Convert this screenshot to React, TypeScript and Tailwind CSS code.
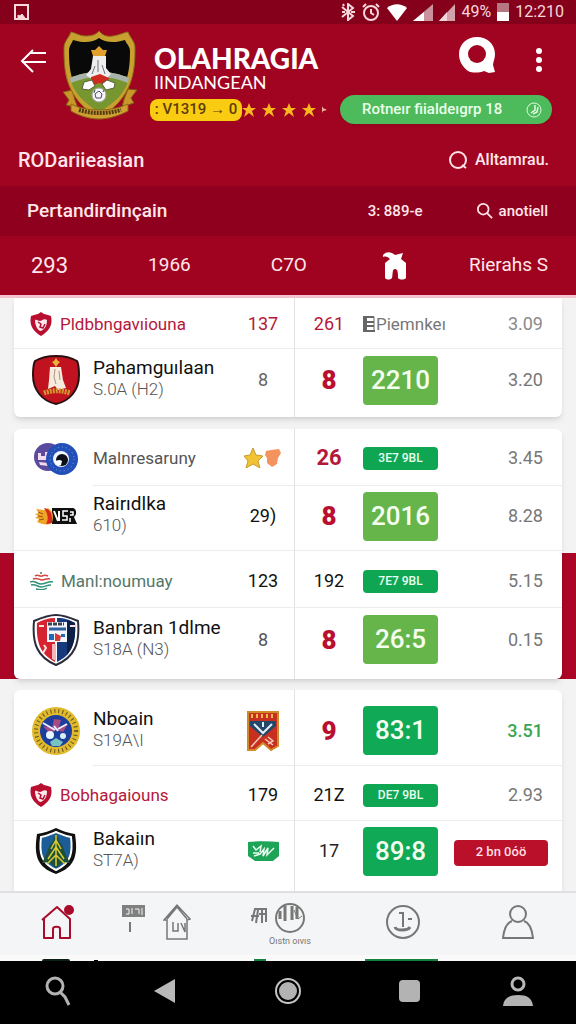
import type { ReactNode } from "react";
import clsx from "clsx";

type Match = {
  lead?: boolean;
  crest: ReactNode;
  name: string;
  nameClass?: string;
  sub?: string;
  first: ReactNode;
  firstClass?: string;
  second: string;
  secondClass: string;
  badge: ReactNode;
  odds: ReactNode;
  oddsClass?: string;
  rowClass: string;
  inset?: boolean;
};

/* ---------- crests ---------- */

const HeaderCrest = () => (
  <svg width="78" height="90" viewBox="0 0 78 90" aria-hidden="true">
    <path d="M2 62l9-2 3 10 3 8-12-3 3-5zM76 60l-9-1-4 10-2 8 12-4-3-5z" fill="#c9962a" stroke="#7d5612" />
    <path d="M38 1c4 5 9 6 14 5 7-1 12-4 15-4 2 6 7 9 7 16 0 24-2 50-36 70C4 68 3 42 3 18 3 11 8 8 10 2c5 1 9 4 14 4 6 0 11-1 14-5z" fill="#c8a02f" stroke="#8f6c1b" />
    <path d="M38 8c6 5 17 5 26 2 2 5 5 6 5 11 0 23-3 42-31 61C11 63 8 44 8 21c0-5 2-6 4-11 9 3 20 3 26-2z" fill="#090909" />
    <path d="M9 48c17-8 42-8 59 0-3 13-12 24-30 34C21 72 12 61 9 48z" fill="#77962f" />
    <path d="M9 48c17-8 42-8 59 0l-1 5c-18-8-39-8-57 0z" fill="#a8b3ab" />
    <path d="M30 20h4l4-4 4 4h4l-2 6H32z" fill="#e0a02c" />
    <path d="M32 26h13v12l5 6-5 5-7-4-6 5-7-5 5-6z" fill="#efeeee" />
    <path d="M37 30v12M41 35l3 9M34 36l-3 8" stroke="#6f7278" />
    <path d="M30 47l9-3 9 4-2 7-8-2-8 3z" fill="#cf2a21" />
    <path d="M23 52l8-2 3 6-6 4-7-1zM46 50l8 3-1 5-8 2-4-6z" fill="#fff" stroke="#59613c" strokeWidth="1" />
    <circle cx="38" cy="65" r="7" fill="#f6f4fa" stroke="#9ea4a0" />
    <path d="M38 61l3 3-1 4h-5l-1-4zM34 60l-1 3M43 60l-1 2" stroke="#4a4a5e" fill="none" />
    <path d="M10 74c16 8 40 8 57 0v7c-8 4-18 8-29 8s-21-4-28-8z" fill="#cfa032" stroke="#8c6718" />
    <path d="M18 80c13 4 28 4 42 0" fill="none" stroke="#513b12" strokeWidth="4" strokeDasharray="2 1" />
  </svg>
);

const SmallShield = () => (
  <svg width="22" height="24" viewBox="0 0 22 24" className="shrink-0" aria-hidden="true">
    <path d="M11 0l3 2c3 1 5 1 7 2 2 9-2 15-10 20C3 19-1 13 1 4c2-1 4-1 7-2z" fill="#b80f31" />
    <path d="M5 8c2-1 3 1 5 1s4-3 7-1c0 4-1 7-3 9l-3 2c-3 0-6-5-6-11z" fill="#fbe9ee" />
    <path d="M8 10l3 2-1 3 3 1 2-4" fill="none" stroke="#b80f31" strokeWidth="1.5" />
  </svg>
);

const RedCrest = () => (
  <svg width="48" height="50" viewBox="0 0 48 50" aria-hidden="true">
    <path d="M24 1c8 0 16 2 21 5 2 4 2 9 2 14 0 15-9 26-23 29C10 46 1 35 1 20c0-5 0-10 2-14 5-3 13-5 21-5z" fill="#c1121f" stroke="#2b1113" strokeWidth="2" />
    <path d="M24 3l2 3 2 1-2 2-2 3-2-3-2-2 2-1z" fill="#edb334" />
    <path d="M18 12h11l2 13 3 8-8 2-3-4-7 3 1-9z" fill="#f6ebdc" />
    <path d="M23 14l-1 8 2 7M27 16l1 9" stroke="#a99383" fill="none" />
    <path d="M12 38c8-3 17-3 26 0" fill="none" stroke="#d49a2b" strokeWidth="5" strokeDasharray="2 1" />
  </svg>
);

const BlueEye = () => (
  <svg width="44" height="34" viewBox="0 0 44 34" aria-hidden="true">
    <circle cx="14" cy="15" r="14" fill="#5b4a9e" />
    <path d="M4 11h3v3h4v-4h3v8H4zM5 20l9 1v3l-8-1z" fill="#f3d9ec" />
    <circle cx="28" cy="17" r="16" fill="#2350b8" />
    <circle cx="28" cy="17" r="12" fill="none" stroke="#7fa0e6" strokeDasharray="1 3" />
    <circle cx="27" cy="17" r="8" fill="#eef4ff" />
    <circle cx="28" cy="18" r="6" fill="#0a0e16" />
    <path d="M20 19c3 0 5-2 8 0l-1 4c-3 1-6-1-7-4z" fill="#fff" />
  </svg>
);

const FlameMark = () => (
  <svg width="42" height="18" viewBox="0 0 42 18" aria-hidden="true">
    <path d="M17 1h21c4 1 4 7 1 9l3 7H17z" fill="#101010" />
    <path d="M1 2l8 1 4-2c5 3 6 7 4 15-5 3-10 1-15-1l2-3-4-1 3-2-3-2 4-1z" fill="#efa526" />
    <path d="M9 1c5 1 9 4 8 15l-6 1c3-5 2-10-2-16z" fill="#d7281f" />
    <path d="M3 5l5 2M3 9l5 1M4 13l5-1" stroke="#a0500f" />
    <path d="M19 4l4 10M24 4v10" stroke="#fff" strokeWidth="2" fill="none" />
    <path d="M33 4h-5v5h4v4h-5M35 5h3v3h-3M35 11v4" stroke="#fff" strokeWidth="1.5" fill="none" />
  </svg>
);

const WaveMark = () => (
  <svg width="23" height="18" viewBox="0 0 23 18" className="shrink-0" fill="none" strokeWidth="1.5" aria-hidden="true">
    <path d="M5 4c3-2 5 1 7 0s4-1 6 0M3 7c4-2 6 1 9 1s5-2 8-1" stroke="#d9463f" />
    <path d="M11 0v2" stroke="#52735b" />
    <path d="M0 10c5-2 7 2 11 2s7-3 12-2M1 13c5-1 7 2 10 2s6-2 10-2M6 17c4 1 8 1 11-1" stroke="#2f927a" />
  </svg>
);

const SplitCrest = () => (
  <svg width="48" height="52" viewBox="0 0 48 52" aria-hidden="true">
    <path d="M24 1c8 0 15 3 22 6 2 22-3 36-22 44C5 43 0 29 2 7c7-3 14-6 22-6z" fill="#fff" stroke="#2a2c3b" strokeWidth="2" />
    <path d="M23 4C16 4 10 6 5 9c-1 19 3 31 18 39z" fill="#d5232f" />
    <path d="M25 4c8 0 13 2 18 5 1 19-3 32-18 39z" fill="#173a7c" />
    <path d="M35 6l8 3c1 13-1 24-8 32z" fill="#0d1f47" />
    <path d="M15 8h20v20H15z" fill="#f3f5fb" />
    <path d="M16 10h16" stroke="#39404f" strokeWidth="3" strokeDasharray="4 1" />
    <path d="M17 15h17" stroke="#2d5fa3" strokeWidth="3" />
    <path d="M17 20h5v6h-5zM29 20h4v3h-4z" fill="#2269b3" />
    <path d="M23 19l6 3-1 5h-5z" fill="#d63a34" />
    <path d="M7 12h5M38 12h5M12 31l2 3-3 5" stroke="#f9e1e3" strokeWidth="2" fill="none" />
    <path d="M20 30h4v17l-4-2z" fill="#f6b6bd" />
  </svg>
);

const RoundCrest = () => (
  <svg width="50" height="52" viewBox="0 0 50 52" aria-hidden="true">
    <circle cx="25" cy="26" r="24" fill="#e0b92c" />
    <circle cx="25" cy="26" r="20" fill="none" stroke="#665521" strokeWidth="4" strokeDasharray="1 3" />
    <circle cx="25" cy="26" r="16" fill="#1d3e9c" />
    <path d="M23 14l7 1-2 7 9-3-5 8-7-2-6 4-7-8 9 2z" fill="#a84a83" />
    <path d="M12 18l12 7M36 19l-9 5M23 21l4 5" stroke="#e9edff" strokeWidth="2" />
    <circle cx="19" cy="30" r="4" fill="#e7f7ff" />
    <circle cx="32" cy="31" r="3" fill="#d8eef7" />
    <path d="M19 37l6-4 7 4-3 4h-8z" fill="#76c3c1" />
  </svg>
);

const TreeCrest = () => (
  <svg width="44" height="48" viewBox="0 0 44 48" aria-hidden="true">
    <path d="M22 1c6 3 12 5 19 6 3 20 1 33-19 40C2 40 0 27 3 7c7-1 13-3 19-6z" fill="#101010" />
    <path d="M22 5c5 2 9 4 15 5 2 16 0 26-15 33C7 36 5 26 7 10c6-1 10-3 15-5z" fill="#1c5d98" stroke="#fff" strokeWidth="2" />
    <path d="M22 6l3 8 4 6 2 6 5 10-7-1-7 6-7-6-7 1 5-10 2-6 4-6z" fill="#1e4f38" />
    <path d="M22 8v31M22 13l-5 9M22 13l5 9M22 20l-8 12M22 20l8 12M22 28l-9 9M22 28l9 9" stroke="#dacb35" strokeWidth="1.5" fill="none" />
  </svg>
);

const StarMark = () => (
  <svg width="38" height="20" viewBox="0 0 38 20" className="mx-auto" aria-hidden="true">
    <path d="M9 0l3 7 7 1-5 5 2 7-7-4-7 4 2-7-4-5 6-1z" fill="#f1c232" stroke="#c99a2e" />
    <path d="M22 3l5-1 8-1 2 4-3 5-1 6-5 3-5-4v-5l-2-3z" fill="#f5935f" />
  </svg>
);

const Pennant = () => (
  <svg width="32" height="40" viewBox="0 0 32 40" className="mx-auto" aria-hidden="true">
    <path d="M1 1h30v34l-7 4-8-7-8 7H1z" fill="#c7301f" stroke="#d08a27" strokeWidth="2" />
    <path d="M4 5h24" stroke="#f0b64f" strokeWidth="4" strokeDasharray="2 3" />
    <path d="M3 10h26v5L16 26 3 15z" fill="#21476b" />
    <path d="M7 13l9 9 9-9M16 11v5" stroke="#e6eff6" strokeWidth="2" fill="none" />
    <path d="M4 36l11-12M18 28l8 6M21 26l5 4-5 3" stroke="#f2c9b8" strokeWidth="1.5" fill="none" />
  </svg>
);

const GreenFlag = () => (
  <svg width="31" height="21" viewBox="0 0 31 21" className="mx-auto" aria-hidden="true">
    <path d="M0 1c10-1 21-1 31 0v14l-6 5H7l-7-5z" fill="#1ea457" />
    <path d="M5 5l3 4 5-4-1 6M6 15l6-2 4-5-1 7 5-8-1 7 7-7M5 12l6 0" stroke="#eafff1" strokeWidth="1.5" fill="none" />
  </svg>
);

/* ---------- small pieces ---------- */

const Score = ({ children, bright }: { children: ReactNode; bright?: boolean }) => (
  <div className={clsx("flex h-[49px] w-[75px] items-center justify-center rounded text-[26px] font-medium text-[#f4fff0]", bright ? "bg-[#10a956]" : "bg-[#66b54b]")}>
    {children}
  </div>
);

const Chip = ({ children }: { children: ReactNode }) => (
  <div className="flex h-[23px] w-[75px] items-center justify-center rounded bg-[#0fa653] text-xs font-medium text-[#e9fff0]">
    {children}
  </div>
);

const red = "text-[#b5173a]";
const blob = "text-[26px] font-black text-[#b90f30]";

const groups: Match[][] = [
  [
    {
      lead: true, crest: <SmallShield />, name: "Pldbbngavıiouna", nameClass: red,
      first: "137", firstClass: red, second: "261", secondClass: red,
      badge: (
        <span className="flex items-center gap-px text-[17px] text-[#777]">
          <svg width="12" height="16" viewBox="0 0 12 16" className="shrink-0" fill="none" stroke="#666" strokeWidth="2" aria-hidden="true">
            <path d="M3 1h8M3 6h8M3 10h8M0 15h12" />
            <path d="M2 0v15" strokeWidth="4" />
            <path d="M11 1v14" strokeWidth="1" />
          </svg>
          Piemnkeı
        </span>
      ),
      odds: "3.09", oddsClass: "text-[#8a8a8a]", rowClass: "h-[51px] pt-0.5",
    },
    {
      crest: <RedCrest />, name: "Pahamguılaan", sub: "S.0A (H2)", first: "8", firstClass: "text-[#666]",
      second: "8", secondClass: blob, badge: <Score>2210</Score>, odds: "3.20", rowClass: "h-[68px] pb-1.5",
    },
  ],
  [
    {
      crest: <BlueEye />, name: "Malnresaruny", nameClass: "text-[17px] text-[#555]", first: <StarMark />,
      second: "26", secondClass: "text-[22px] font-bold text-[#b5173a]", badge: <Chip>3E7 9BL</Chip>,
      odds: "3.45", rowClass: "h-[57px] pt-0.5", inset: true,
    },
    {
      crest: <FlameMark />, name: "Rairıdlka", sub: "610)", first: "29)", firstClass: "text-lg text-[#111]",
      second: "8", secondClass: blob, badge: <Score>2016</Score>, odds: "8.28", rowClass: "h-[65px] pb-1",
    },
    {
      lead: true, crest: <WaveMark />, name: "Manl:noumuay", nameClass: "text-[#54776b]",
      first: "123", firstClass: "text-[#111]", second: "192", secondClass: "text-[#111]",
      badge: <Chip>7E7 9BL</Chip>, odds: "5.15", rowClass: "h-[57px] pt-1",
    },
    {
      crest: <SplitCrest />, name: "Banbran 1dlme", sub: "S18A (N3)", first: "8", firstClass: "text-[#555]",
      second: "8", secondClass: blob, badge: <Score>26:5</Score>, odds: "0.15", rowClass: "h-[71px] pb-2",
    },
  ],
  [
    {
      crest: <RoundCrest />, name: "Nboain", sub: "S19A\\I", first: <Pennant />, second: "9", secondClass: blob,
      badge: <Score bright>83:1</Score>, odds: "3.51", oddsClass: "font-medium text-[#37a553]",
      rowClass: "h-[76px] pt-1.5", inset: true,
    },
    {
      lead: true, crest: <SmallShield />, name: "Bobhagaiouns", nameClass: red, first: "179", firstClass: "text-[#111]",
      second: "21Z", secondClass: "text-[#111]", badge: <Chip>DE7 9BL</Chip>, odds: "2.93", rowClass: "h-[55px] pt-1",
    },
    {
      crest: <TreeCrest />, name: "Bakaiın", sub: "ST7A)", first: <GreenFlag />, second: "17", secondClass: "text-[#222]",
      badge: <Score bright>89:8</Score>,
      odds: (
        <button className="h-[26px] w-[94px] rounded bg-[#bb1029] text-[13px] font-medium text-[#ffdfe3]">2 bn 0óö</button>
      ),
      rowClass: "h-[70px] pb-2.5",
    },
  ],
];

function MatchTable({ rows, className }: { rows: Match[]; className?: string }) {
  return (
    <table className={clsx("w-full table-fixed border-separate border-spacing-0 rounded-md bg-white text-lg shadow-md", className)}>
      <colgroup>
        <col className="w-[79px]" />
        <col />
        <col className="w-[62px]" />
        <col className="w-[69px]" />
        <col className="w-[78px]" />
        <col className="w-[121px]" />
      </colgroup>
      <tbody>
        {rows.map((row, i) => {
          const line = i < rows.length - 1 && "border-b border-[#ececec]";
          return (
            <tr key={row.name}>
              {row.lead ? (
                <td colSpan={2} className={clsx("py-0 pl-4", row.rowClass, line)}>
                  <div className={clsx("flex items-center gap-2 whitespace-nowrap text-[17px]", row.nameClass)}>
                    {row.crest}
                    {row.name}
                  </div>
                </td>
              ) : (
                <>
                  <td className={clsx("py-0 pl-1", row.rowClass, !row.inset && line)}>
                    <div className="flex justify-center">{row.crest}</div>
                  </td>
                  <td className={clsx("whitespace-nowrap py-0", row.rowClass, line)}>
                    <div className={clsx("leading-[22px]", row.nameClass ?? "text-[19px] text-[#111]")}>{row.name}</div>
                    {row.sub && <div className="pb-1 text-[17px] font-light leading-5 text-[#555]">{row.sub}</div>}
                  </td>
                </>
              )}
              <td className={clsx("py-0 text-center", row.rowClass, line, row.firstClass)}>{row.first}</td>
              <td className={clsx("border-l border-l-[#e2e2e2] py-0 text-center leading-6", row.rowClass, line, row.secondClass)}>{row.second}</td>
              <td className={clsx("whitespace-nowrap py-0", row.rowClass, line)}>{row.badge}</td>
              <td className={clsx("py-0 text-right", typeof row.odds === "string" ? "pr-[19px]" : "pr-[14px]", row.rowClass, line, row.oddsClass ?? "text-[#777]")}>
                {row.odds}
              </td>
            </tr>
          );
        })}
      </tbody>
    </table>
  );
}

function StatusBar() {
  return (
    <div className="flex h-6 items-center bg-[#85001b] pl-3.5 pr-3 text-base leading-none text-[#f6d8dd]">
      <svg width="15" height="16" viewBox="0 0 15 16" fill="none" stroke="#f6d8dd" strokeWidth="2" aria-hidden="true">
        <path d="M1 1h13v14H1z" />
        <path d="M4 14v-3l2 1 2-2 3 4z" fill="#f6d8dd" strokeWidth="1" />
      </svg>
      <div className="ml-auto flex items-center gap-1.5">
        <svg width="14" height="18" viewBox="0 0 14 18" fill="none" stroke="#f6d8dd" strokeWidth="2" aria-hidden="true">
          <path d="M1 4l11 9-5 4V1l5 4L1 14M1 9h3M10 9h4M2 1l1 2" />
        </svg>
        <svg width="20" height="18" viewBox="0 0 20 18" fill="none" stroke="#f6d8dd" strokeWidth="2" aria-hidden="true">
          <circle cx="10" cy="10" r="7" />
          <path d="M10 6v4l3 2M2 4l3-3M18 4l-3-3" />
        </svg>
        <svg width="20" height="17" viewBox="0 0 20 17" fill="#fff" aria-hidden="true">
          <path d="M0 4c6-5 14-5 20 0L10 17z" />
        </svg>
        <svg width="20" height="17" viewBox="0 0 20 17" aria-hidden="true">
          <path d="M20 0v17H0z" fill="#c9929c" />
          <path d="M11 8v9H0z" fill="#fff" />
        </svg>
        <svg width="16" height="17" viewBox="0 0 16 17" aria-hidden="true">
          <path d="M16 0v17H0z" fill="#d3a2ab" />
          <path d="M8 8v9H0z" fill="#f3d5da" />
        </svg>
        <span>49%</span>
        <svg width="12" height="18" viewBox="0 0 12 18" aria-hidden="true">
          <path d="M0 0h12v18H0z" fill="#b67782" />
          <path d="M0 9h12v9H0z" fill="#fff" />
        </svg>
        <span>12:210</span>
      </div>
    </div>
  );
}

function Header() {
  return (
    <header className="flex h-[109px] gap-[15px] bg-[#a10421] pl-5 pr-6 text-white">
      <button aria-label="Back" className="mt-6 h-[26px] w-[26px] shrink-0">
        <svg width="26" height="26" viewBox="0 0 26 26" fill="none" stroke="#fff" strokeWidth="2" aria-hidden="true">
          <path d="M13 2L2 13l11 11M13 5l-3 0M2 14h24M11 5h15" />
        </svg>
      </button>
      <div className="mt-1.5 shrink-0">
        <HeaderCrest />
      </div>
      <div className="flex min-w-0 flex-1 flex-col">
        <div className="flex h-[71px] items-start">
          <div className="pt-[18px] font-[Lato,sans-serif]">
            <h1 className="text-[28px] font-black leading-8">OLAHRAGIA</h1>
            <p className="text-lg leading-4">IINDANGEAN</p>
          </div>
          <button aria-label="Search" className="ml-auto mt-3">
            <svg width="38" height="38" viewBox="0 0 38 38" aria-hidden="true">
              <path d="M19 1c10 0 18 7 18 17 0 5-2 8-2 11l2 7-6 1-5-2c-5 2-12 2-16 0C5 31 1 26 1 18 1 8 9 1 19 1z" fill="#fff" />
              <circle cx="19" cy="18" r="9" fill="#a10421" />
            </svg>
          </button>
          <button aria-label="More" className="ml-10 mr-2.5 mt-6">
            <svg width="6" height="24" viewBox="0 0 6 24" fill="#fff" aria-hidden="true">
              <circle cx="3" cy="3" r="3" />
              <circle cx="3" cy="12" r="3" />
              <circle cx="3" cy="21" r="3" />
            </svg>
          </button>
        </div>
        <div className="flex items-center">
          <span className="-ml-1 flex h-[22px] w-[92px] shrink-0 items-center justify-center whitespace-nowrap rounded-lg bg-[#f9cc12] text-[15px] font-medium text-[#5e3c05]">: V1319 → 0</span>
          <div className="flex items-center gap-1.5">
            {[0, 1, 2, 3].map((n) => (
              <svg key={n} width="14" height="14" viewBox="0 0 14 14" fill="#fbb81c" aria-hidden="true">
                <path d="M7 0l2 5h5l-4 3 2 6-5-4-5 4 2-6-4-3h5z" />
              </svg>
            ))}
            <svg width="5" height="7" viewBox="0 0 5 7" fill="#f6b59a" aria-hidden="true">
              <path d="M0 0l1 2 4 2-4 1-1 2z" />
            </svg>
          </div>
          <button className="ml-auto flex h-[29px] w-[212px] items-center justify-between whitespace-nowrap rounded-full bg-[#4dba5c] pl-[22px] pr-2.5 text-[15px] font-medium text-[#eaffea] shadow">
            Rotneır fiialdeıgrp 18
            <svg width="16" height="16" viewBox="0 0 16 16" fill="none" stroke="#e0fbe2" aria-hidden="true">
              <circle cx="8" cy="8" r="7" />
              <path d="M9 3v5l-4 3M12 5l-1 5-4 2" strokeWidth="1.5" />
            </svg>
          </button>
        </div>
      </div>
    </header>
  );
}

const Magnifier = ({ size, round }: { size: number; round?: boolean }) => (
  <svg width={size} height={size} viewBox="0 0 18 18" fill="none" stroke="#ffe3e8" strokeWidth="2" aria-hidden="true">
    {round ? <circle cx="9" cy="9" r="8" /> : <circle cx="7" cy="7" r="6" />}
    <path d={round ? "M13 14l4 3" : "M11 11l6 6"} />
  </svg>
);

function HeaderRows() {
  return (
    <nav className="text-[#ffe6ea]">
      <div className="flex h-[53px] items-center justify-between bg-[#a10421] pl-[18px] pr-[27px]">
        <a href="#kategori" className="text-xl font-medium">RODariieasian</a>
        <button className="flex items-center gap-2 text-base font-medium">
          <Magnifier size={18} round />
          Alltamrau.
        </button>
      </div>
      <div className="flex h-[50px] items-center bg-[#8f001e] pl-[27px] pr-7">
        <a href="#pertandingan" className="text-[19px] font-medium">Pertandirdinçain</a>
        <span className="ml-auto mr-[54px] text-[15px] font-medium">3: 889-e</span>
        <button className="flex items-center gap-1.5 text-[15px] font-medium">
          <Magnifier size={16} />
          anotiell
        </button>
      </div>
      <div className="flex h-[59px] items-center bg-[#9f0320] pl-[31px] pr-7 text-[19px]">
        <div className="flex flex-1 items-center justify-between pr-[62px]">
          <a href="#a" className="text-[22px]">293</a>
          <a href="#b" className="ml-1">1966</a>
          <a href="#c" className="ml-1">C7O</a>
          <a href="#d" aria-label="Klub">
            <svg width="24" height="28" viewBox="0 0 24 28" fill="#fff" aria-hidden="true">
              <path d="M0 3c4-4 8-3 12 0l8-2-2 6 5 4v15c-2 2-6 2-8 0 0-5 0-9-3-9s-2 5-3 9c-2 2-5 2-7 0V11l5-4C5 5 3 4 0 5z" />
            </svg>
          </a>
        </div>
        <a href="#e">Rierahs S</a>
      </div>
    </nav>
  );
}

function BottomNav() {
  return (
    <nav className="grid h-16 grid-cols-5 border-t-2 border-[#dfdfe1] bg-[#f4f5f6] text-[#777]">
      <button aria-label="Beranda" className="flex items-center justify-center pb-1">
        <svg width="34" height="36" viewBox="0 0 34 36" fill="none" stroke="#a80b2b" strokeWidth="2" strokeLinejoin="round" aria-hidden="true">
          <path d="M1 16L16 3l13 12v19H19V25c0-3-7-3-7 0v9H3V15" />
          <circle cx="28" cy="6" r="4" fill="#a80b2b" />
        </svg>
      </button>
      <button aria-label="Liga" className="relative flex items-center justify-center pb-1">
        <svg width="23" height="28" viewBox="0 0 23 28" className="absolute left-[7px] top-3" aria-hidden="true">
          <path d="M0 0h23v12H0z" fill="#808080" />
          <path d="M4 4h3v5H4M10 3v6M13 4h4v5M20 3v7" stroke="#f4f5f6" strokeWidth="1" fill="none" />
          <path d="M8 17v10" stroke="#777" strokeWidth="2" />
        </svg>
        <svg width="28" height="38" viewBox="0 0 28 38" className="ml-2" fill="none" stroke="#777" strokeWidth="1" aria-hidden="true">
          <path d="M1 17L14 2l13 14-3 1v19H4V17zM4 16L14 4l10 12" strokeWidth="1.5" />
          <path d="M10 19v9h5v-8M18 20l4 9v-9" strokeWidth="1.5" />
        </svg>
      </button>
      <button className="relative flex flex-col items-center pl-1 pt-[9px] text-[9px] leading-3">
        <svg width="19" height="17" viewBox="0 0 19 17" className="absolute left-5 top-3.5" fill="none" stroke="#777" strokeWidth="2" aria-hidden="true">
          <path d="M2 14L5 2h12M1 9h8M8 3L6 16M12 3v13M16 3v12M9 7h7" />
        </svg>
        <svg width="32" height="33" viewBox="0 0 32 33" fill="none" stroke="#777" aria-hidden="true">
          <circle cx="16" cy="16" r="14" strokeWidth="2" />
          <path d="M6 9v8M11 4v15M18 4v14M23 5v12" strokeWidth="3" />
          <path d="M20 8l4 9 4-3" strokeWidth="1" />
        </svg>
        Oıstn oıvıs
      </button>
      <button aria-label="Riwayat" className="flex items-center justify-center pb-1">
        <svg width="36" height="36" viewBox="0 0 36 36" fill="none" stroke="#777" aria-hidden="true">
          <circle cx="18" cy="18" r="16" strokeWidth="2" />
          <path d="M14 9h4v14M23 15h4" strokeWidth="2" />
          <path d="M10 23c1 4 13 4 15 0" strokeWidth="3" />
        </svg>
      </button>
      <button aria-label="Profil" className="flex items-center justify-center pb-1">
        <svg width="32" height="35" viewBox="0 0 32 35" fill="none" stroke="#777" strokeWidth="2" aria-hidden="true">
          <circle cx="16" cy="9" r="8" />
          <path d="M10 16c-6 2-8 8-9 17h30c-1-9-3-15-9-17" />
        </svg>
      </button>
    </nav>
  );
}

function SystemBar() {
  const item = "flex items-center justify-center pb-1";
  return (
    <div className="grid h-[63px] grid-cols-5 bg-black">
      <button aria-label="Cari" className={item}>
        <svg width="26" height="30" viewBox="0 0 26 30" fill="none" stroke="#b3b3b3" strokeWidth="3" aria-hidden="true">
          <circle cx="10" cy="10" r="8" />
          <path d="M15 16l5 5 4 8" />
        </svg>
      </button>
      <button aria-label="Kembali" className={clsx(item, "pr-4")}>
        <svg width="22" height="26" viewBox="0 0 22 26" fill="#b9b9b9" aria-hidden="true">
          <path d="M21 1v24L0 13z" />
        </svg>
      </button>
      <button aria-label="Home" className={item}>
        <svg width="28" height="28" viewBox="0 0 28 28" aria-hidden="true">
          <circle cx="14" cy="14" r="12" fill="none" stroke="#c4c4c4" strokeWidth="2" />
          <circle cx="14" cy="14" r="9" fill="#b3b3b3" />
        </svg>
      </button>
      <button aria-label="Aplikasi" className={clsx(item, "pl-3")}>
        <span className="h-[22px] w-[21px] rounded-sm bg-[#b3b3b3]" />
      </button>
      <button aria-label="Akun" className={item}>
        <svg width="30" height="30" viewBox="0 0 30 30" aria-hidden="true">
          <circle cx="15" cy="8" r="6" fill="none" stroke="#b9b9b9" strokeWidth="3" />
          <path d="M0 30c1-8 6-11 15-11s14 3 15 11z" fill="#b3b3b3" />
        </svg>
      </button>
    </div>
  );
}

export default function App() {
  return (
    <div className="flex min-h-screen flex-col bg-[#f3f3f4] font-[Roboto,sans-serif]">
      <StatusBar />
      <Header />
      <HeaderRows />
      <main className="flex-1 border-t-[3px] border-[#f3c3cf]">
        <section className="px-3.5 pb-3">
          <MatchTable rows={groups[0]} className="rounded-t-none" />
        </section>
        <section className="bg-[linear-gradient(to_bottom,transparent_124px,#ab0626_124px)] px-3.5">
          <MatchTable rows={groups[1]} />
        </section>
        <section className="px-3.5 pt-[11px]">
          <MatchTable rows={groups[2]} className="rounded-b-none" />
        </section>
      </main>
      <div>
        <BottomNav />
        {/* top edge of the next row, showing under the tab bar */}
        <div className="flex h-1.5 items-end bg-[#fafafa]">
          <div className="ml-[42px] h-0.5 w-7 rounded-t-full bg-[#0b1f12]" />
          <div className="ml-6 h-px w-1 bg-black" />
          <div className="ml-[156px] h-0.5 w-3 bg-[#14823f]" />
          <div className="ml-auto mr-[138px] h-0.5 w-[73px] bg-[#14823f]" />
        </div>
      </div>
      <SystemBar />
    </div>
  );
}
